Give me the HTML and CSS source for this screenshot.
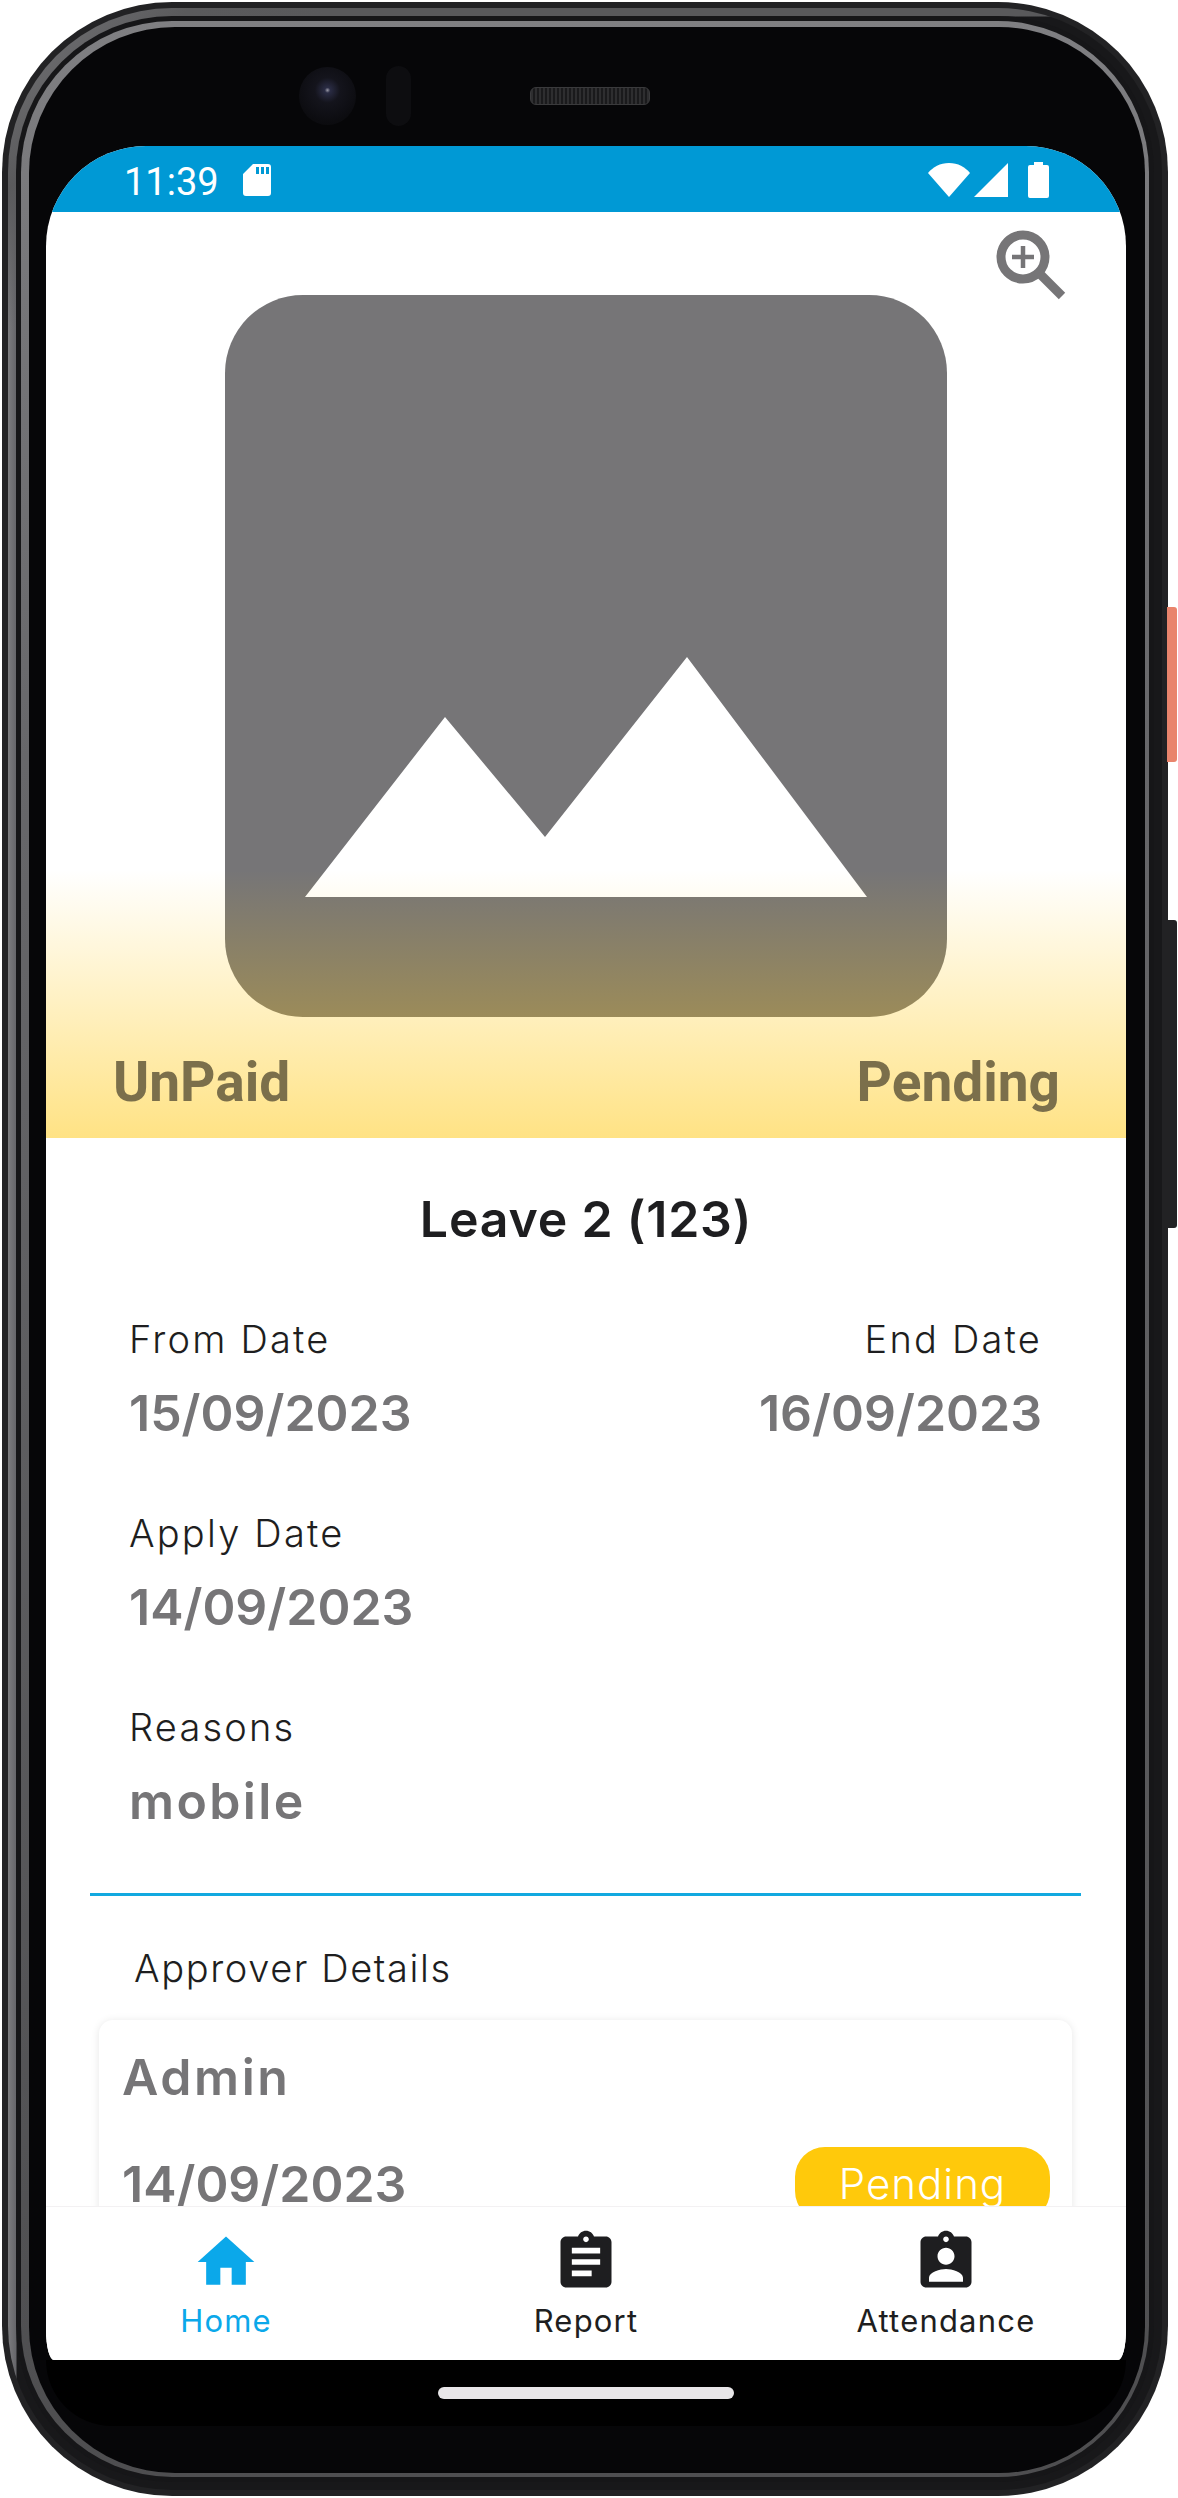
FILE: index.html
```html
<!DOCTYPE html>
<html lang="en">
<head>
  <meta charset="UTF-8">
  <meta name="viewport" content="width=device-width, initial-scale=1.0">
  <title>Leave Details</title>
  <link rel="stylesheet" href="styles.css">
</head>
<body>
  <div class="phone">
    <span class="side-btn power"></span>
    <span class="side-btn volume"></span>
    <div class="phone-rim">
      <div class="phone-edge">
        <div class="phone-shine">
          <div class="bezel">
            <div class="sensors">
              <span class="camera"></span>
              <span class="sensor"></span>
              <span class="speaker"></span>
            </div>

            <div class="screen">
              <div class="status-bar">
                <span class="time">11:39</span>
                <svg class="sd-icon" viewBox="0 0 28 32"><path fill="#fff" fill-rule="evenodd" d="M10 0h15a3 3 0 0 1 3 3v26a3 3 0 0 1-3 3H3a3 3 0 0 1-3-3V10zM13 3v7h3V3zm5 0v7h3V3zm5 0v7h3V3z"/></svg>
                <span class="status-right">
                  <svg class="wifi-icon" viewBox="0 0 42 34"><path fill="#fff" d="M0 10C5 4 12 0 21 0s16 4 21 10L21 34z"/></svg>
                  <svg class="signal-icon" viewBox="0 0 34 34"><path fill="#fff" d="M34 0v34H0z"/></svg>
                  <svg class="battery-icon" viewBox="0 0 21 36"><path fill="#fff" d="M6 0h9v3h4a2 2 0 0 1 2 2v29a2 2 0 0 1-2 2H2a2 2 0 0 1-2-2V5a2 2 0 0 1 2-2h4z"/></svg>
                </span>
              </div>

              <div class="content">
                <div class="hero">
                  <svg class="zoom-icon" viewBox="0 0 70 70">
                    <circle cx="27" cy="27" r="22" fill="none" stroke="#767577" stroke-width="9"/>
                    <path d="M16 27h22M27 16v22" stroke="#767577" stroke-width="4.5"/>
                    <path d="M43 43l23 23" stroke="#767577" stroke-width="9"/>
                  </svg>
                  <div class="placeholder">
                    <svg viewBox="0 0 722 722"><path fill="#fff" d="M80 602L220 422 320 542 462 362 642 602z"/></svg>
                  </div>
                  <div class="hero-fade"></div>
                  <div class="hero-labels">
                    <span>UnPaid</span>
                    <span>Pending</span>
                  </div>
                </div>

                <h1 class="title">Leave 2 (123)</h1>

                <div class="detail-row">
                  <div class="field">
                    <p class="field-label">From Date</p>
                    <p class="field-value">15/09/2023</p>
                  </div>
                  <div class="field field-right">
                    <p class="field-label">End Date</p>
                    <p class="field-value">16/09/2023</p>
                  </div>
                </div>
                <div class="detail-row">
                  <div class="field">
                    <p class="field-label">Apply Date</p>
                    <p class="field-value">14/09/2023</p>
                  </div>
                </div>
                <div class="detail-row">
                  <div class="field">
                    <p class="field-label">Reasons</p>
                    <p class="field-value word">mobile</p>
                  </div>
                </div>

                <div class="divider"></div>
                <p class="approver-title">Approver Details</p>

                <div class="approver-card">
                  <p class="approver-name">Admin</p>
                  <div class="approver-row">
                    <span class="approver-date">14/09/2023</span>
                    <span class="badge">Pending</span>
                  </div>
                </div>
              </div>

              <div class="bottom-nav">
                <div class="nav-item active">
                  <svg viewBox="0 0 24 24"><path fill="currentColor" d="M10 20v-6h4v6h5v-8h3L12 3 2 12h3v8z"/></svg>
                  <span>Home</span>
                </div>
                <div class="nav-item">
                  <svg viewBox="0 0 24 24"><path fill="currentColor" d="M19 3h-4.18C14.4 1.84 13.3 1 12 1c-1.3 0-2.4.84-2.82 2H5c-1.1 0-2 .9-2 2v14c0 1.1.9 2 2 2h14c1.1 0 2-.9 2-2V5c0-1.1-.9-2-2-2zm-7 0c.55 0 1 .45 1 1s-.45 1-1 1-1-.45-1-1 .45-1 1-1zm2 14H7v-2h7v2zm3-4H7v-2h10v2zm0-4H7V7h10v2z"/></svg>
                  <span>Report</span>
                </div>
                <div class="nav-item">
                  <svg viewBox="0 0 24 24"><path fill="currentColor" d="M19 3h-4.18C14.4 1.84 13.3 1 12 1c-1.3 0-2.4.84-2.82 2H5c-1.1 0-2 .9-2 2v14c0 1.1.9 2 2 2h14c1.1 0 2-.9 2-2V5c0-1.1-.9-2-2-2zm-7 0c.55 0 1 .45 1 1s-.45 1-1 1-1-.45-1-1 .45-1 1-1zm0 4c1.66 0 3 1.34 3 3s-1.34 3-3 3-3-1.34-3-3 1.34-3 3-3zm6 12H6v-1.4c0-2 4-3.1 6-3.1s6 1.1 6 3.1V19z"/></svg>
                  <span>Attendance</span>
                </div>
              </div>
            </div>

            <div class="chin">
              <span class="home-bar"></span>
            </div>
          </div>
        </div>
      </div>
    </div>
  </div>
</body>
</html>
```

FILE: styles.css
```css
* {
  margin: 0;
  padding: 0;
  box-sizing: border-box;
}
body {
  width: 1178px;
  height: 2498px;
  overflow: hidden;
  background: #fff;
  font-family: 'Inter', 'Liberation Sans', sans-serif;
}

/* phone frame */
.phone {
  position: relative;
  width: 1166px;
  height: 2494px;
  margin: 2px 0 0 2px;
  padding: 6px;
  border-radius: 170px;
  background: #222224;
}
.side-btn {
  position: absolute;
  left: 1165px;
  width: 10px;
  border-radius: 0 3px 3px 0;
}
.power {
  top: 605px;
  height: 155px;
  background: #e9846c;
}
.volume {
  top: 918px;
  height: 308px;
  background: #222224;
}
.phone-rim {
  height: 100%;
  padding: 8px;
  border-radius: 164px;
  background:
    linear-gradient(135deg, #77777a 0, #5a5a5c 5%, rgba(40, 40, 42, 0) 9%),
    linear-gradient(#59595b 0, #59595b 8px, rgba(40, 40, 42, 0) 9px),
    linear-gradient(90deg, #7c7c7f 0, #66666a 8px, #18181a 9px, #18181a 100%);
}
.phone-edge {
  height: 100%;
  padding: 5px;
  border-radius: 156px;
  background: #161618;
}
.phone-shine {
  height: 100%;
  padding: 6px 4px 4px 8px;
  border-radius: 151px;
  background: linear-gradient(#7f7f82 0, #67676a 30%, #4e4e50 100%);
}
.bezel {
  display: flex;
  flex-direction: column;
  height: 100%;
  padding: 0 19px 0 17px;
  border-radius: 146px;
  background: #060608;
}
.sensors {
  display: flex;
  align-items: center;
  flex: none;
  height: 119px;
  padding: 18px 0 0 253px;
}
.camera {
  width: 57px;
  height: 58px;
  border-radius: 50%;
  background: radial-gradient(circle at 50% 40%, #9a9aa8 0, #2a2c44 6%, #14141c 28%, #0c0c10 70%, #09090b 100%);
}
.sensor {
  width: 25px;
  height: 60px;
  margin-left: 30px;
  border-radius: 13px;
  background: #0d0d10;
}
.speaker {
  width: 120px;
  height: 18px;
  margin-left: 119px;
  border: 1px solid #3a3a3c;
  border-radius: 6px;
  background: repeating-linear-gradient(90deg, #2e2e30 0, #2e2e30 2px, #1a1a1c 2px, #1a1a1c 4px);
}

/* app screen */
.screen {
  display: flex;
  flex-direction: column;
  flex: none;
  height: 2214px;
  overflow: hidden;
  border-radius: 100px 100px 8px 8px / 100px 100px 30px 30px;
  background: #fff;
}
.status-bar {
  display: flex;
  align-items: center;
  flex: none;
  height: 66px;
  padding: 2px 77px 0 78px;
  background: #0099d5;
  color: #fff;
}
.time {
  width: 119px;
  margin-top: 3px;
  font-family: 'Roboto', sans-serif;
  font-size: 38px;
}
.sd-icon {
  width: 28px;
  height: 32px;
}
.status-right {
  display: flex;
  align-items: center;
  gap: 4px;
  margin-left: auto;
}
.wifi-icon {
  width: 42px;
  height: 34px;
}
.signal-icon {
  width: 34px;
  height: 34px;
}
.battery-icon {
  width: 21px;
  height: 36px;
  margin-left: 16px;
}
.content {
  flex: 1;
  min-height: 0;
  overflow: hidden;
}
.hero {
  position: relative;
  height: 926px;
  padding-top: 83px;
}
.zoom-icon {
  position: absolute;
  top: 18px;
  right: 60px;
  width: 70px;
  height: 70px;
}
.placeholder {
  width: 722px;
  height: 722px;
  margin: 0 auto;
  border-radius: 78px;
  background: #767577;
}
.placeholder svg {
  display: block;
  width: 100%;
  height: 100%;
}
.hero-fade {
  position: absolute;
  left: 0;
  right: 0;
  bottom: 0;
  height: 268px;
  background: linear-gradient(rgba(255, 198, 11, 0), rgba(255, 198, 11, 0.5));
}
.hero-labels {
  position: absolute;
  left: 67px;
  right: 66px;
  top: 840px;
  display: flex;
  justify-content: space-between;
  font-family: 'Roboto', sans-serif;
  font-size: 55px;
  font-weight: 700;
  line-height: 60px;
  color: #7b6f4b;
}
.title {
  margin-top: 40px;
  font-size: 50px;
  font-weight: 600;
  letter-spacing: 0.8px;
  line-height: 82px;
  text-align: center;
  color: #1e1e20;
}
.detail-row {
  display: flex;
  justify-content: space-between;
  margin-top: 46px;
  padding: 0 84px 0 83px;
}
.title + .detail-row {
  margin-top: 49px;
}
.field-right {
  text-align: right;
}
.field-label {
  font-size: 38px;
  font-weight: 350;
  letter-spacing: 2.2px;
  line-height: 60px;
  color: #1e1e20;
}
.field-value {
  font-size: 50px;
  font-weight: 600;
  line-height: 88px;
  color: #767577;
}
.field-value.word {
  letter-spacing: 2.4px;
}
.divider {
  height: 3px;
  margin: 48px 45px 0 44px;
  background: #12a9e0;
}
.approver-title {
  margin-top: 42px;
  padding-left: 88px;
  font-size: 38px;
  font-weight: 350;
  letter-spacing: 1.6px;
  line-height: 60px;
  color: #1e1e20;
}
.approver-card {
  margin: 22px 54px 0 53px;
  padding: 17px 22px 30px 23px;
  border-radius: 14px;
  background: #fff;
  box-shadow: 0 1px 8px rgba(0, 0, 0, 0.1);
}
.approver-name {
  font-size: 50px;
  font-weight: 600;
  letter-spacing: 2.6px;
  line-height: 80px;
  color: #767577;
}
.approver-row {
  display: flex;
  align-items: center;
  justify-content: space-between;
  margin-top: 30px;
}
.approver-date {
  font-size: 50px;
  font-weight: 600;
  color: #767577;
}
.badge {
  width: 255px;
  height: 74px;
  border-radius: 30px;
  background: #ffc90b;
  font-size: 42px;
  font-weight: 300;
  letter-spacing: 1px;
  line-height: 74px;
  text-align: center;
  color: #fff;
}

/* bottom nav */
.bottom-nav {
  display: grid;
  grid-template-columns: repeat(3, 1fr);
  flex: none;
  height: 154px;
  padding-top: 21px;
  border-top: 1px solid #f3f1f3;
  background: #fff;
}
.nav-item {
  display: flex;
  flex-direction: column;
  align-items: center;
  color: #1e1e20;
  font-size: 31px;
  letter-spacing: 1.2px;
  line-height: 44px;
}
.nav-item svg {
  width: 68px;
  height: 68px;
  margin-bottom: 3px;
}
.nav-item.active {
  color: #0ba8ea;
}
.chin {
  display: flex;
  justify-content: center;
  flex: none;
  height: 66px;
  padding-top: 27px;
  border-radius: 0 0 100px 100px;
  background: #000;
}
.home-bar {
  width: 296px;
  height: 12px;
  border-radius: 6px;
  background: #e8e6e8;
}
```
